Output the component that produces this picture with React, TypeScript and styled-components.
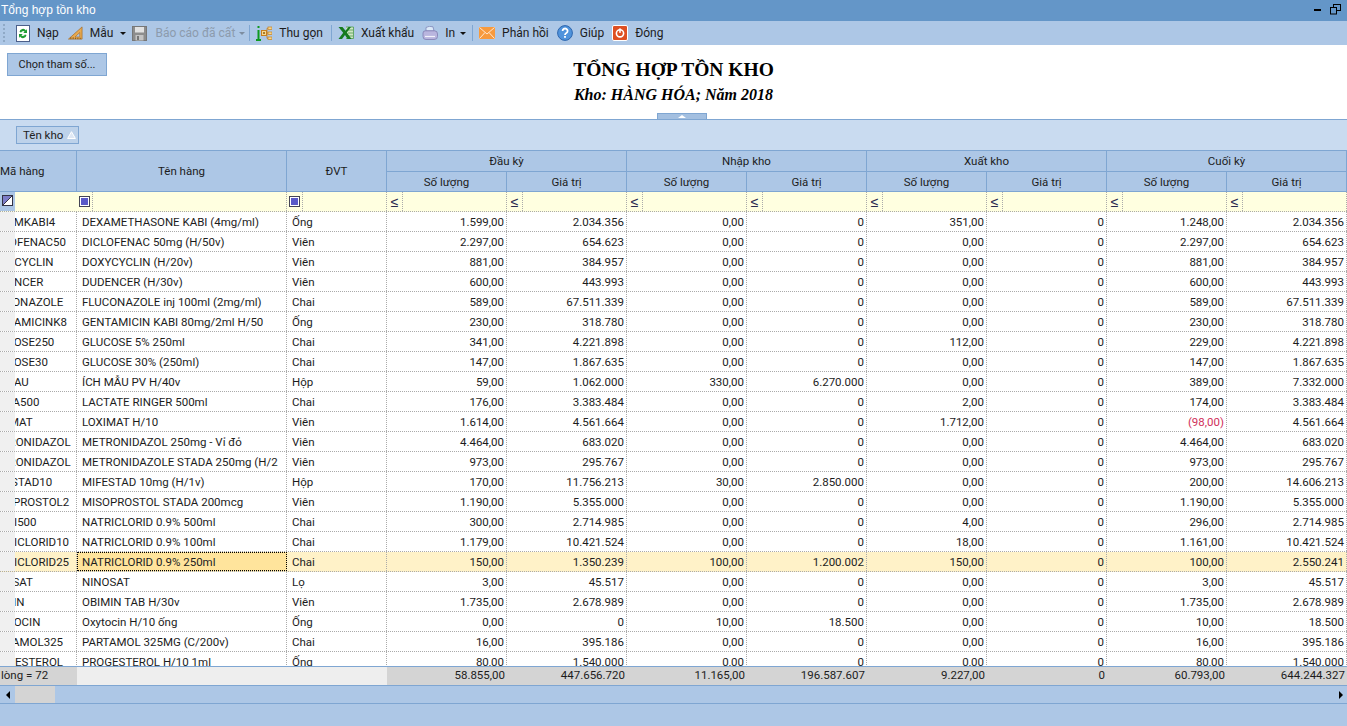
import React from 'react';
import styled, { createGlobalStyle } from 'styled-components';

const GlobalStyle = createGlobalStyle`
  html, body { margin: 0; padding: 0; background: #ADC7E6; }
  body { font-family: "Liberation Sans", Arial, sans-serif; font-size: 12px; color: #222; }
`;

const COLUMNS = '77px 210px 100px repeat(8, 120px)';
const GRID_FONT = '11.5px Roboto, "Liberation Sans", sans-serif';

const Page = styled.div`
  width: 1347px;
  height: 726px;
  display: flex;
  flex-direction: column;
  overflow: hidden;
`;

const TitleBar = styled.div`
  height: 21px;
  flex: none;
  background: #6496C8;
  color: #fff;
  display: flex;
  align-items: center;
  justify-content: space-between;
  padding: 0 6px 2px 1px;
  box-sizing: border-box;
`;

const WindowButtons = styled.div`
  display: flex;
  align-items: center;
  gap: 9px;
`;

const Toolbar = styled.div`
  height: 24px;
  flex: none;
  background: #ADC7E6;
  display: flex;
  align-items: center;
  padding-left: 3px;
`;

const Gripper = styled.div`
  width: 4px;
  height: 18px;
  margin-right: 9px;
  border-left: 2px dotted #8FA9C6;
  box-sizing: border-box;
`;

const ToolItem = styled.div<{ $disabled?: boolean; $space?: number }>`
  display: flex;
  align-items: center;
  gap: 7px;
  margin-right: ${({ $space }) => $space ?? 8}px;
  color: ${({ $disabled }) => ($disabled ? '#8c9bad' : '#1c1c1c')};
  white-space: nowrap;
  font: 12px Roboto, "Liberation Sans", sans-serif;
`;

const ToolSeparator = styled.div`
  width: 1px;
  height: 16px;
  background: #7FA6D2;
  margin-right: 6px;
`;

const DropArrow = styled.span<{ $disabled?: boolean; $space?: number }>`
  width: 0;
  height: 0;
  border-left: 3px solid transparent;
  border-right: 3px solid transparent;
  border-top: 3px solid ${({ $disabled }) => ($disabled ? '#7d8da0' : '#111')};
  margin-right: ${({ $space }) => $space ?? 4}px;
`;

const ParamPanel = styled.div`
  height: 75px;
  flex: none;
  background: #fff;
  border-bottom: 1px solid #7FA6D2;
  box-sizing: border-box;
  position: relative;
  display: grid;
  grid-template-columns: 1fr auto 1fr;
  padding: 8px 7px 0;
`;

const ParamButton = styled.button`
  width: 100px;
  height: 23px;
  background: #ADC7E6;
  border: 1px solid #7FA6D2;
  font: 11px Roboto, "Liberation Sans", sans-serif;
  color: #1c1c1c;
  padding: 0;
  justify-self: start;
`;

const ReportHead = styled.div`
  text-align: center;
  font-family: "Liberation Serif", "Times New Roman", serif;
  font-weight: 700;
  color: #000;
  padding-top: 7px;
`;

const ReportTitle = styled.div`
  font-size: 19.5px;
  line-height: 20px;
`;

const ReportSub = styled.div`
  font-size: 16px;
  font-style: italic;
  line-height: 20px;
  margin-top: 5px;
`;

const CollapseHandle = styled.div`
  position: absolute;
  left: 657px;
  bottom: 0;
  width: 50px;
  height: 6px;
  box-sizing: border-box;
  background: #A3BFE0;
  border: 1px solid #7FA6D2;
  border-bottom: none;
  display: flex;
  justify-content: center;
  &::after {
    content: '';
    margin-top: 1px;
    border-left: 4px solid transparent;
    border-right: 4px solid transparent;
    border-bottom: 3px solid #fff;
    height: 0;
  }
`;

const GroupPanel = styled.div`
  height: 30px;
  flex: none;
  background: #C9DBF0;
  padding: 6px 0 0 16px;
  box-sizing: border-box;
`;

const GroupChip = styled.div`
  width: 63px;
  height: 18px;
  box-sizing: border-box;
  background: #BDD2EA;
  border: 1px solid #7FA6D2;
  display: flex;
  align-items: center;
  gap: 4px;
  padding-left: 6px;
  white-space: nowrap;
  font: ${GRID_FONT};
`;

const HeaderGrid = styled.div`
  flex: none;
  display: grid;
  grid-template-columns: ${COLUMNS};
  grid-template-rows: 21px 20px;
  background: #ADC7E6;
  border-top: 1px solid #7FA6D2;
  font: ${GRID_FONT};
`;

const HeadCell = styled.div<{ $rows?: number; $cols?: number; $left?: boolean }>`
  grid-row: span ${({ $rows }) => $rows ?? 1};
  grid-column: span ${({ $cols }) => $cols ?? 1};
  display: flex;
  align-items: center;
  justify-content: ${({ $left }) => ($left ? 'flex-start' : 'center')};
  border-right: 1px solid #7FA6D2;
  border-bottom: 1px solid #7FA6D2;
  box-sizing: border-box;
  color: #1c1c1c;
`;

const FilterRow = styled.div`
  flex: none;
  height: 20px;
  display: grid;
  grid-template-columns: ${COLUMNS};
  background: #FFFFE0;
  border-bottom: 1px dotted #aaa;
  box-sizing: border-box;
`;

const FilterCorner = styled.div`
  display: flex;
`;

const CornerIcon = styled.div`
  width: 15px;
  height: 19px;
  background: #ADC7E6;
  padding: 3px 0 0 2px;
  box-sizing: border-box;
`;

const FilterCell = styled.div`
  border-right: 1px dotted #aaa;
  display: flex;
`;

const FilterOp = styled.div`
  width: 16px;
  flex: none;
  border-right: 1px dotted #aaa;
  display: flex;
  align-items: center;
  justify-content: center;
  color: #2c2c50;
  font-size: 14px;
  box-sizing: border-box;
`;

const FilterCheck = styled.span`
  width: 11px;
  height: 11px;
  box-sizing: border-box;
  border: 1px solid #445;
  background: #fff;
  padding: 1px;
  &::after {
    content: '';
    display: block;
    width: 7px;
    height: 7px;
    background: #5A5AC8;
  }
`;

const RowsArea = styled.div`
  flex: 1;
  min-height: 0;
  overflow: hidden;
  background: #fff;
  font: ${GRID_FONT};
`;

const Row = styled.div<{ $selected?: boolean }>`
  height: 20px;
  display: grid;
  grid-template-columns: ${COLUMNS};
  background: ${({ $selected }) => ($selected ? '#FFF2C8' : '#fff')};
  border-bottom: 1px dotted #aaa;
  box-sizing: border-box;
`;

const CodeCell = styled.div`
  display: flex;
  border-right: 1px dotted #aaa;
  overflow: hidden;
`;

const Gutter = styled.div`
  width: 15px;
  flex: none;
  background: #F0F0F0;
`;

const CodeClip = styled.div`
  flex: 1;
  min-width: 0;
  overflow: hidden;
  white-space: nowrap;
  line-height: 20px;
  color: #1c1c1c;
`;

const CodeText = styled.span`
  display: inline-block;
  margin-left: -30px;
`;

const Cell = styled.div<{ $right?: boolean; $negative?: boolean; $focused?: boolean }>`
  border-right: 1px dotted #aaa;
  line-height: 20px;
  overflow: hidden;
  white-space: nowrap;
  box-sizing: border-box;
  padding: ${({ $right }) => ($right ? '0 2px 0 0' : '0 0 0 5px')};
  text-align: ${({ $right }) => ($right ? 'right' : 'left')};
  color: ${({ $negative }) => ($negative ? '#D0305A' : '#1c1c1c')};
  ${({ $focused }) => $focused && 'background: #FFE49C; outline: 1px dotted #000; outline-offset: -1px;'}
`;

const Footer = styled.div`
  flex: none;
  height: 20px;
  display: grid;
  grid-template-columns: ${COLUMNS};
  background: #D4D4D4;
  border-top: 1px solid #7FA6D2;
  border-bottom: 1px solid #7FA6D2;
  box-sizing: border-box;
  font: 11.5px/17px Roboto, "Liberation Sans", sans-serif;
`;

const FooterCell = styled.div<{ $blank?: boolean; $cols?: number }>`
  grid-column: span ${({ $cols }) => $cols ?? 1};
  background: ${({ $blank }) => ($blank ? '#EEEEEE' : 'transparent')};
  text-align: right;
  padding-right: 2px;
  color: #1c1c1c;
  white-space: nowrap;
  overflow: hidden;
`;

const FooterCount = styled.div`
  white-space: nowrap;
  overflow: hidden;
  padding-left: 1px;
`;

const ScrollBar = styled.div`
  flex: none;
  height: 18px;
  background: #ADC7E6;
  border-bottom: 1px solid #7FA6D2;
  display: flex;
  align-items: center;
  box-sizing: border-box;
`;

const ScrollArrow = styled.span<{ $right?: boolean }>`
  width: 0;
  height: 0;
  border-top: 4px solid transparent;
  border-bottom: 4px solid transparent;
  ${({ $right }) => ($right ? 'border-left: 4px solid #000; margin: 0 4px 0 auto;' : 'border-right: 4px solid #000; margin: 0 5px 0 6px;')}
`;

const ScrollThumb = styled.div`
  width: 40px;
  height: 17px;
  background: #D4D4D4;
`;

const StatusBar = styled.div`
  flex: none;
  height: 22px;
  background: #ADC7E6;
`;

const RefreshIcon = () => (
  <svg width="14" height="17" viewBox="0 0 14 17">
    <rect x="0.5" y="0.5" width="13" height="16" fill="#fff" stroke="#4b5f8a" />
    <path d="M3.5 7 A3.6 3.6 0 0 1 10 5.4 L11 4 V8 H7.2 L8.6 6.7 A2 2 0 0 0 5.2 7.6 Z" fill="#1f9d33" />
    <path d="M10.5 10 A3.6 3.6 0 0 1 4 11.6 L3 13 V9 H6.8 L5.4 10.3 A2 2 0 0 0 8.8 9.4 Z" fill="#1f9d33" />
  </svg>
);

const RulerIcon = () => (
  <svg width="15" height="14" viewBox="0 0 16 14">
    <path d="M15 0.5 V13.5 H0.5 Z" fill="#E8A94E" stroke="#A9702A" strokeWidth="0.8" />
    <path d="M12.5 6.5 V11.2 H7.5 Z" fill="#ADC7E6" stroke="#A9702A" strokeWidth="0.7" />
    <path d="M3 13.5 V11.5 M5.5 13.5 V11.5 M8 13.5 V12 M10.5 13.5 V12 M13 13.5 V12" stroke="#6d4a1c" strokeWidth="0.8" />
  </svg>
);

const SaveIcon = () => (
  <svg width="16" height="15" viewBox="0 0 16 15">
    <rect x="0.5" y="0.5" width="14" height="14" fill="#8d8d8d" stroke="#777" />
    <rect x="3" y="1" width="9" height="5.5" fill="#e2e2e2" />
    <rect x="3.5" y="9" width="8" height="5.5" fill="#c4c4c4" />
    <rect x="5" y="10" width="2" height="4" fill="#777" />
  </svg>
);

const TreeIcon = () => (
  <svg width="16" height="15" viewBox="0 0 16 15">
    <rect x="1.5" y="0" width="2" height="2" fill="#0f9a20" />
    <rect x="1.5" y="4" width="2" height="9" fill="#0f9a20" />
    <rect x="0" y="13" width="5" height="2" fill="#0f9a20" />
    <rect x="5.5" y="4.5" width="5" height="5" fill="#F6D78F" stroke="#C67F1E" />
    <path d="M7 7 H9 M8 6 V8" stroke="#8a5a10" />
    <rect x="12" y="1" width="4" height="2.5" fill="#F6D78F" stroke="#C67F1E" strokeWidth="0.7" />
    <rect x="12" y="6" width="4" height="2.5" fill="#F6D78F" stroke="#C67F1E" strokeWidth="0.7" />
    <rect x="12" y="11" width="4" height="2.5" fill="#F6D78F" stroke="#C67F1E" strokeWidth="0.7" />
    <path d="M10.5 7 H12 M11 2.3 V12.3 M11 2.3 H12 M11 12.3 H12" stroke="#C67F1E" strokeWidth="0.8" />
  </svg>
);

const ExcelIcon = () => (
  <svg width="16" height="14" viewBox="0 0 16 14">
    <path d="M8 1 H15.5 V12.5 H8" fill="#cfe6c4" stroke="#4c9a4c" strokeWidth="0.8" />
    <path d="M10 4 H15 M10 7 H15 M10 10 H15" stroke="#4c9a4c" strokeWidth="0.8" />
    <path d="M0.5 1 H4.5 L7.5 4.8 L10.5 1 H13 L8.8 6.6 L13.5 13 H9.5 L7 9 L4 13 H0.5 L5.2 6.8 Z" fill="#157a1f" />
  </svg>
);

const PrinterIcon = () => (
  <svg width="16" height="15" viewBox="0 0 16 15">
    <path d="M4 1.5 Q7 -0.5 11 0.8 L12 5 H4 Z" fill="#dbe9f8" stroke="#7f86b8" strokeWidth="0.8" />
    <path d="M1 7 Q1 4.8 3.5 4.8 H12.5 Q15.5 4.8 15.5 8 V10.5 Q15.5 13.5 12 13.5 H4 Q1 13.5 1 10.5 Z" fill="#b9b5de" stroke="#7f7cb0" strokeWidth="0.8" />
    <path d="M3 10.5 H13" stroke="#f2f1fa" strokeWidth="1.2" />
  </svg>
);

const MailIcon = () => (
  <svg width="16" height="12" viewBox="0 0 16 12">
    <rect x="0" y="0" width="16" height="12" fill="#F79A3E" />
    <path d="M0.5 0.5 L8 7 L15.5 0.5 M0.5 11.5 L6 5.5 M15.5 11.5 L10 5.5" stroke="#FFE7CF" strokeWidth="1" fill="none" />
  </svg>
);

const HelpIcon = () => (
  <svg width="16" height="16" viewBox="0 0 16 16">
    <circle cx="8" cy="8" r="7.4" fill="#4F93DC" stroke="#2E66AE" />
    <path d="M5.6 6 A2.5 2.4 0 1 1 9.4 8 Q8 8.8 8 10" fill="none" stroke="#fff" strokeWidth="1.8" />
    <rect x="7.1" y="11" width="1.8" height="1.8" fill="#fff" />
  </svg>
);

const PowerIcon = () => (
  <svg width="16" height="16" viewBox="0 0 16 16">
    <rect x="0.5" y="0.5" width="15" height="15" rx="1.5" fill="#DE4F22" stroke="#fff" />
    <circle cx="8" cy="8.3" r="3.6" fill="none" stroke="#fff" strokeWidth="1.6" />
    <rect x="7.2" y="3.4" width="1.6" height="4.4" fill="#fff" />
  </svg>
);

const RestoreIcon = () => (
  <svg width="11" height="11" viewBox="0 0 11 11">
    <rect x="3.5" y="0.5" width="7" height="6" fill="none" stroke="#000" />
    <rect x="0.5" y="3.5" width="6" height="6.5" fill="#6496C8" stroke="#000" />
  </svg>
);

const MinimizeIcon = () => (
  <svg width="7" height="2" viewBox="0 0 7 2">
    <rect width="7" height="2" fill="#000" />
  </svg>
);

const CornerGlyph = () => (
  <svg width="11" height="11" viewBox="0 0 11 11">
    <rect x="0.5" y="0.5" width="10" height="10" fill="#7C7CC8" stroke="#334" />
    <path d="M1 10 L10 1 V10 Z" fill="#fff" />
    <path d="M1 10 L10 1" stroke="#334" />
  </svg>
);

const SortUp = () => (
  <svg width="9" height="8" viewBox="0 0 9 8">
    <path d="M4.5 0.7 L8.4 7.5 H0.6 Z" fill="#dfe8f4" stroke="#fff" />
  </svg>
);

type RowData = [string, string, string, string[]];

const rest = (a: string, b: string, c = '0,00', d = '0', e = '0,00', f = a, g = b) => [a, b, c, d, e, '0', f, g];

const rows: RowData[] = [
  ['DEXAMKABI4', 'DEXAMETHASONE KABI (4mg/ml)', 'Ống', rest('1.599,00', '2.034.356', '0,00', '0', '351,00', '1.248,00')],
  ['DICLOFENAC50', 'DICLOFENAC 50mg (H/50v)', 'Viên', rest('2.297,00', '654.623')],
  ['DOXYCYCLIN', 'DOXYCYCLIN (H/20v)', 'Viên', rest('881,00', '384.957')],
  ['DUDENCER', 'DUDENCER (H/30v)', 'Viên', rest('600,00', '443.993')],
  ['FLUCONAZOLE', 'FLUCONAZOLE inj 100ml (2mg/ml)', 'Chai', rest('589,00', '67.511.339')],
  ['GENTAMICINK8', 'GENTAMICIN KABI 80mg/2ml H/50', 'Ống', rest('230,00', '318.780')],
  ['GLUCOSE250', 'GLUCOSE 5% 250ml', 'Chai', rest('341,00', '4.221.898', '0,00', '0', '112,00', '229,00')],
  ['GLUCOSE30', 'GLUCOSE 30% (250ml)', 'Chai', rest('147,00', '1.867.635')],
  ['ICHMAU', 'ÍCH MẪU PV H/40v', 'Hộp', rest('59,00', '1.062.000', '330,00', '6.270.000', '0,00', '389,00', '7.332.000')],
  ['LACTA500', 'LACTATE RINGER 500ml', 'Chai', rest('176,00', '3.383.484', '0,00', '0', '2,00', '174,00')],
  ['LOXIMAT', 'LOXIMAT H/10', 'Viên', rest('1.614,00', '4.561.664', '0,00', '0', '1.712,00', '(98,00)')],
  ['METRONIDAZOL', 'METRONIDAZOL 250mg - Vỉ đỏ', 'Viên', rest('4.464,00', '683.020')],
  ['METRONIDAZOL', 'METRONIDAZOLE STADA 250mg (H/2', 'Viên', rest('973,00', '295.767')],
  ['MIFESTAD10', 'MIFESTAD 10mg (H/1v)', 'Hộp', rest('170,00', '11.756.213', '30,00', '2.850.000', '0,00', '200,00', '14.606.213')],
  ['MISOPROSTOL2', 'MISOPROSTOL STADA 200mcg', 'Viên', rest('1.190,00', '5.355.000')],
  ['NATRI500', 'NATRICLORID 0.9% 500ml', 'Chai', rest('300,00', '2.714.985', '0,00', '0', '4,00', '296,00')],
  ['NATRICLORID10', 'NATRICLORID 0.9% 100ml', 'Chai', rest('1.179,00', '10.421.524', '0,00', '0', '18,00', '1.161,00')],
  ['NATRICLORID25', 'NATRICLORID 0.9% 250ml', 'Chai', rest('150,00', '1.350.239', '100,00', '1.200.002', '150,00', '100,00', '2.550.241')],
  ['NINOSAT', 'NINOSAT', 'Lọ', rest('3,00', '45.517')],
  ['OBIMIN', 'OBIMIN TAB H/30v', 'Viên', rest('1.735,00', '2.678.989')],
  ['OXYTOCIN', 'Oxytocin H/10 ống', 'Ống', rest('0,00', '0', '10,00', '18.500', '0,00', '10,00', '18.500')],
  ['PARTAMOL325', 'PARTAMOL 325MG (C/200v)', 'Chai', rest('16,00', '395.186')],
  ['PROGESTEROL', 'PROGESTEROL H/10 1ml', 'Ống', rest('80,00', '1.540.000')],
];

const totals = ['58.855,00', '447.656.720', '11.165,00', '196.587.607', '9.227,00', '0', '60.793,00', '644.244.327'];
const groups = ['Đầu kỳ', 'Nhập kho', 'Xuất kho', 'Cuối kỳ'];
const SELECTED_ROW = 17;

export default function App() {
  return (
    <Page>
      <GlobalStyle />
      <TitleBar>
        <span>Tổng hợp tồn kho</span>
        <WindowButtons>
          <MinimizeIcon />
          <RestoreIcon />
        </WindowButtons>
      </TitleBar>
      <Toolbar>
        <Gripper />
        <ToolItem $space={9}><RefreshIcon />Nạp</ToolItem>
        <ToolItem $space={7}><RulerIcon />Mẫu</ToolItem>
        <DropArrow $space={6} />
        <ToolItem $disabled $space={4}><SaveIcon />Báo cáo đã cất</ToolItem>
        <DropArrow $disabled />
        <ToolSeparator />
        <ToolItem><TreeIcon />Thu gọn</ToolItem>
        <ToolSeparator />
        <ToolItem $space={8}><ExcelIcon />Xuất khẩu</ToolItem>
        <ToolItem $space={5}><PrinterIcon />In</ToolItem>
        <DropArrow $space={6} />
        <ToolSeparator />
        <ToolItem><MailIcon />Phản hồi</ToolItem>
        <ToolItem><HelpIcon />Giúp</ToolItem>
        <ToolItem><PowerIcon />Đóng</ToolItem>
      </Toolbar>
      <ParamPanel>
        <ParamButton>Chọn tham số...</ParamButton>
        <ReportHead>
          <ReportTitle>TỔNG HỢP TỒN KHO</ReportTitle>
          <ReportSub>Kho: HÀNG HÓA; Năm 2018</ReportSub>
        </ReportHead>
        <CollapseHandle />
      </ParamPanel>
      <GroupPanel>
        <GroupChip>Tên kho <SortUp /></GroupChip>
      </GroupPanel>
      <HeaderGrid>
        <HeadCell $rows={2} $left>Mã hàng</HeadCell>
        <HeadCell $rows={2}>Tên hàng</HeadCell>
        <HeadCell $rows={2}>ĐVT</HeadCell>
        {groups.map((g) => <HeadCell key={g} $cols={2}>{g}</HeadCell>)}
        {groups.flatMap((g) => [
          <HeadCell key={g + '1'}>Số lượng</HeadCell>,
          <HeadCell key={g + '2'}>Giá trị</HeadCell>,
        ])}
      </HeaderGrid>
      <FilterRow>
        <FilterCorner><CornerIcon><CornerGlyph /></CornerIcon></FilterCorner>
        <FilterCell><FilterOp><FilterCheck /></FilterOp></FilterCell>
        <FilterCell><FilterOp><FilterCheck /></FilterOp></FilterCell>
        {totals.map((_, i) => (
          <FilterCell key={i}><FilterOp>≤</FilterOp></FilterCell>
        ))}
      </FilterRow>
      <RowsArea>
        {rows.map(([code, name, unit, values], i) => (
          <Row key={i} $selected={i === SELECTED_ROW}>
            <CodeCell>
              <Gutter />
              <CodeClip><CodeText>{code}</CodeText></CodeClip>
            </CodeCell>
            <Cell $focused={i === SELECTED_ROW}>{name}</Cell>
            <Cell>{unit}</Cell>
            {values.map((v, j) => (
              <Cell key={j} $right $negative={v.startsWith('(')}>{v}</Cell>
            ))}
          </Row>
        ))}
      </RowsArea>
      <Footer>
        <FooterCount>lòng = 72</FooterCount>
        <FooterCell $blank $cols={2} />
        {totals.map((t, i) => <FooterCell key={i}>{t}</FooterCell>)}
      </Footer>
      <ScrollBar>
        <ScrollArrow />
        <ScrollThumb />
        <ScrollArrow $right />
      </ScrollBar>
      <StatusBar />
    </Page>
  );
}
